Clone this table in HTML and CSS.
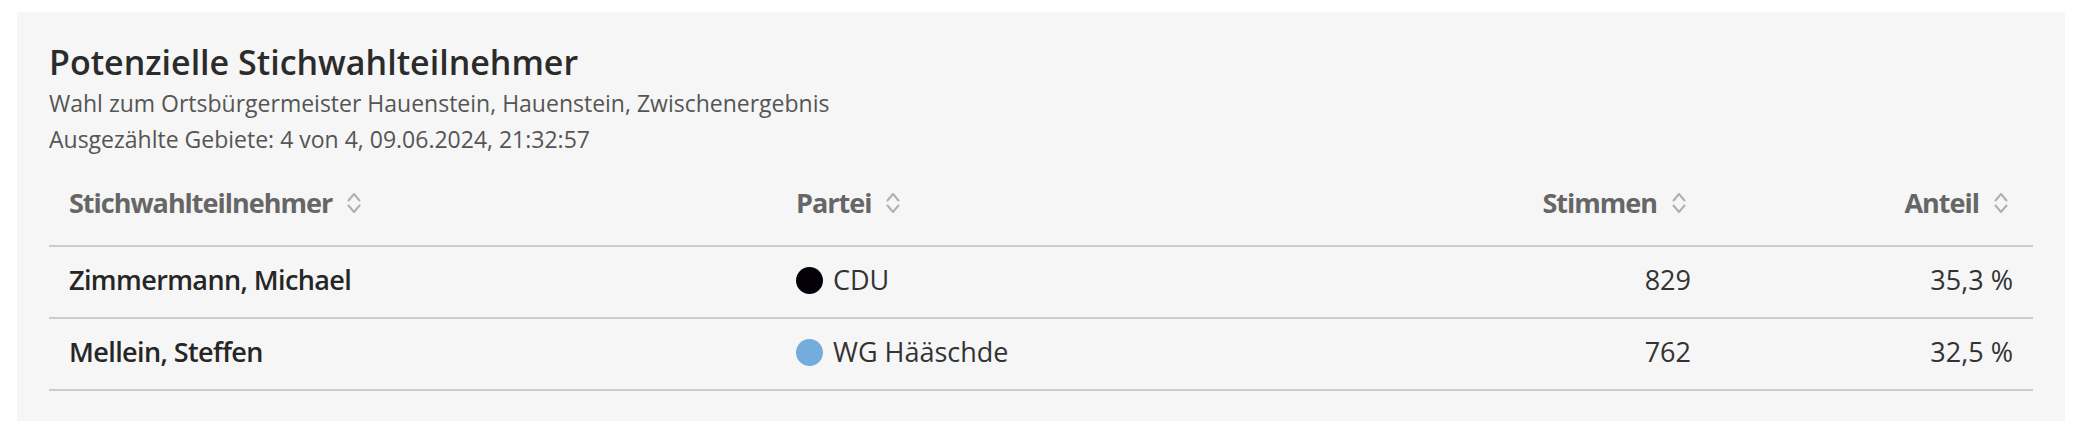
FILE: index.html
```html
<!DOCTYPE html>
<html lang="de">
<head>
<meta charset="utf-8">
<title>Potenzielle Stichwahlteilnehmer</title>
<link rel="stylesheet" href="styles.css">
</head>
<body>
<section class="card">
  <h2 class="title">Potenzielle Stichwahlteilnehmer</h2>
  <p class="meta">Wahl zum Ortsbürgermeister Hauenstein, Hauenstein, Zwischenergebnis</p>
  <p class="meta">Ausgezählte Gebiete: 4 von 4, 09.06.2024, 21:32:57</p>
  <table class="results">
    <colgroup>
      <col class="col-name">
      <col class="col-party">
      <col class="col-votes">
      <col class="col-share">
    </colgroup>
    <thead>
      <tr>
        <th class="left"><span class="th-inner">Stichwahlteilnehmer<svg class="sort" viewBox="0 0 14 22" width="14" height="22"><path d="M1.5 8.5 L7 2 L12.5 8.5 M1.5 13.5 L7 20 L12.5 13.5"/></svg></span></th>
        <th class="left"><span class="th-inner">Partei<svg class="sort" viewBox="0 0 14 22" width="14" height="22"><path d="M1.5 8.5 L7 2 L12.5 8.5 M1.5 13.5 L7 20 L12.5 13.5"/></svg></span></th>
        <th class="right"><span class="th-inner">Stimmen<svg class="sort" viewBox="0 0 14 22" width="14" height="22"><path d="M1.5 8.5 L7 2 L12.5 8.5 M1.5 13.5 L7 20 L12.5 13.5"/></svg></span></th>
        <th class="right"><span class="th-inner">Anteil<svg class="sort" viewBox="0 0 14 22" width="14" height="22"><path d="M1.5 8.5 L7 2 L12.5 8.5 M1.5 13.5 L7 20 L12.5 13.5"/></svg></span></th>
      </tr>
    </thead>
    <tbody>
      <tr>
        <td class="name">Zimmermann, Michael</td>
        <td><div class="party"><span class="dot dot-cdu"></span><span>CDU</span></div></td>
        <td class="right">829</td>
        <td class="right">35,3 %</td>
      </tr>
      <tr>
        <td class="name">Mellein, Steffen</td>
        <td><div class="party"><span class="dot dot-wg"></span><span>WG Hääschde</span></div></td>
        <td class="right">762</td>
        <td class="right">32,5 %</td>
      </tr>
    </tbody>
  </table>
</section>
</body>
</html>
```

FILE: styles.css
```css
html, body {
  margin: 0;
  padding: 0;
  background: #ffffff;
}

body {
  font-family: "Open Sans", "Noto Sans", "Liberation Sans", sans-serif;
  color: #333333;
  padding: 12px 0 0 17px;
}

.card {
  width: 2048px;
  box-sizing: border-box;
  background: #f6f6f6;
  padding: 30px 32px 30px;
}

.title {
  margin: 0;
  font-size: 34px;
  line-height: 40px;
  font-weight: 600;
  color: #2b2b2b;
}

.meta {
  margin: 0;
  font-size: 23px;
  line-height: 36px;
  color: #555555;
}

.title + .meta {
  margin-top: 3px;
}

.results {
  margin-top: 7px;
  width: 100%;
  border-collapse: collapse;
  table-layout: fixed;
  font-size: 27px;
  line-height: 30px;
}

.col-name { width: 727px; }
.col-party { width: 600px; }
.col-votes { width: 335px; }
.col-share { width: 322px; }

.results th {
  padding: 24px 20px 27px;
  border-bottom: 2px solid #cccccc;
  color: #666666;
  font-weight: 700;
  letter-spacing: -1px;
  vertical-align: middle;
}

.results th.right {
  padding-right: 25px;
}

.results td {
  padding: 18px 20px 22px;
  border-bottom: 2px solid #cccccc;
  color: #333333;
  vertical-align: middle;
}

.left { text-align: left; }
.right { text-align: right; }

.th-inner {
  display: inline-flex;
  align-items: center;
  gap: 15px;
}

.sort {
  fill: none;
  stroke: #b0b0b0;
  stroke-width: 2;
  stroke-linecap: round;
  stroke-linejoin: round;
}

.results td.name {
  font-weight: 600;
  letter-spacing: -0.6px;
  color: #262626;
}

.party {
  display: flex;
  align-items: center;
  gap: 10px;
}

.dot {
  width: 27px;
  height: 27px;
  border-radius: 50%;
  flex: none;
}

.dot-cdu { background: #050008; }
.dot-wg { background: #74acdb; }
```
